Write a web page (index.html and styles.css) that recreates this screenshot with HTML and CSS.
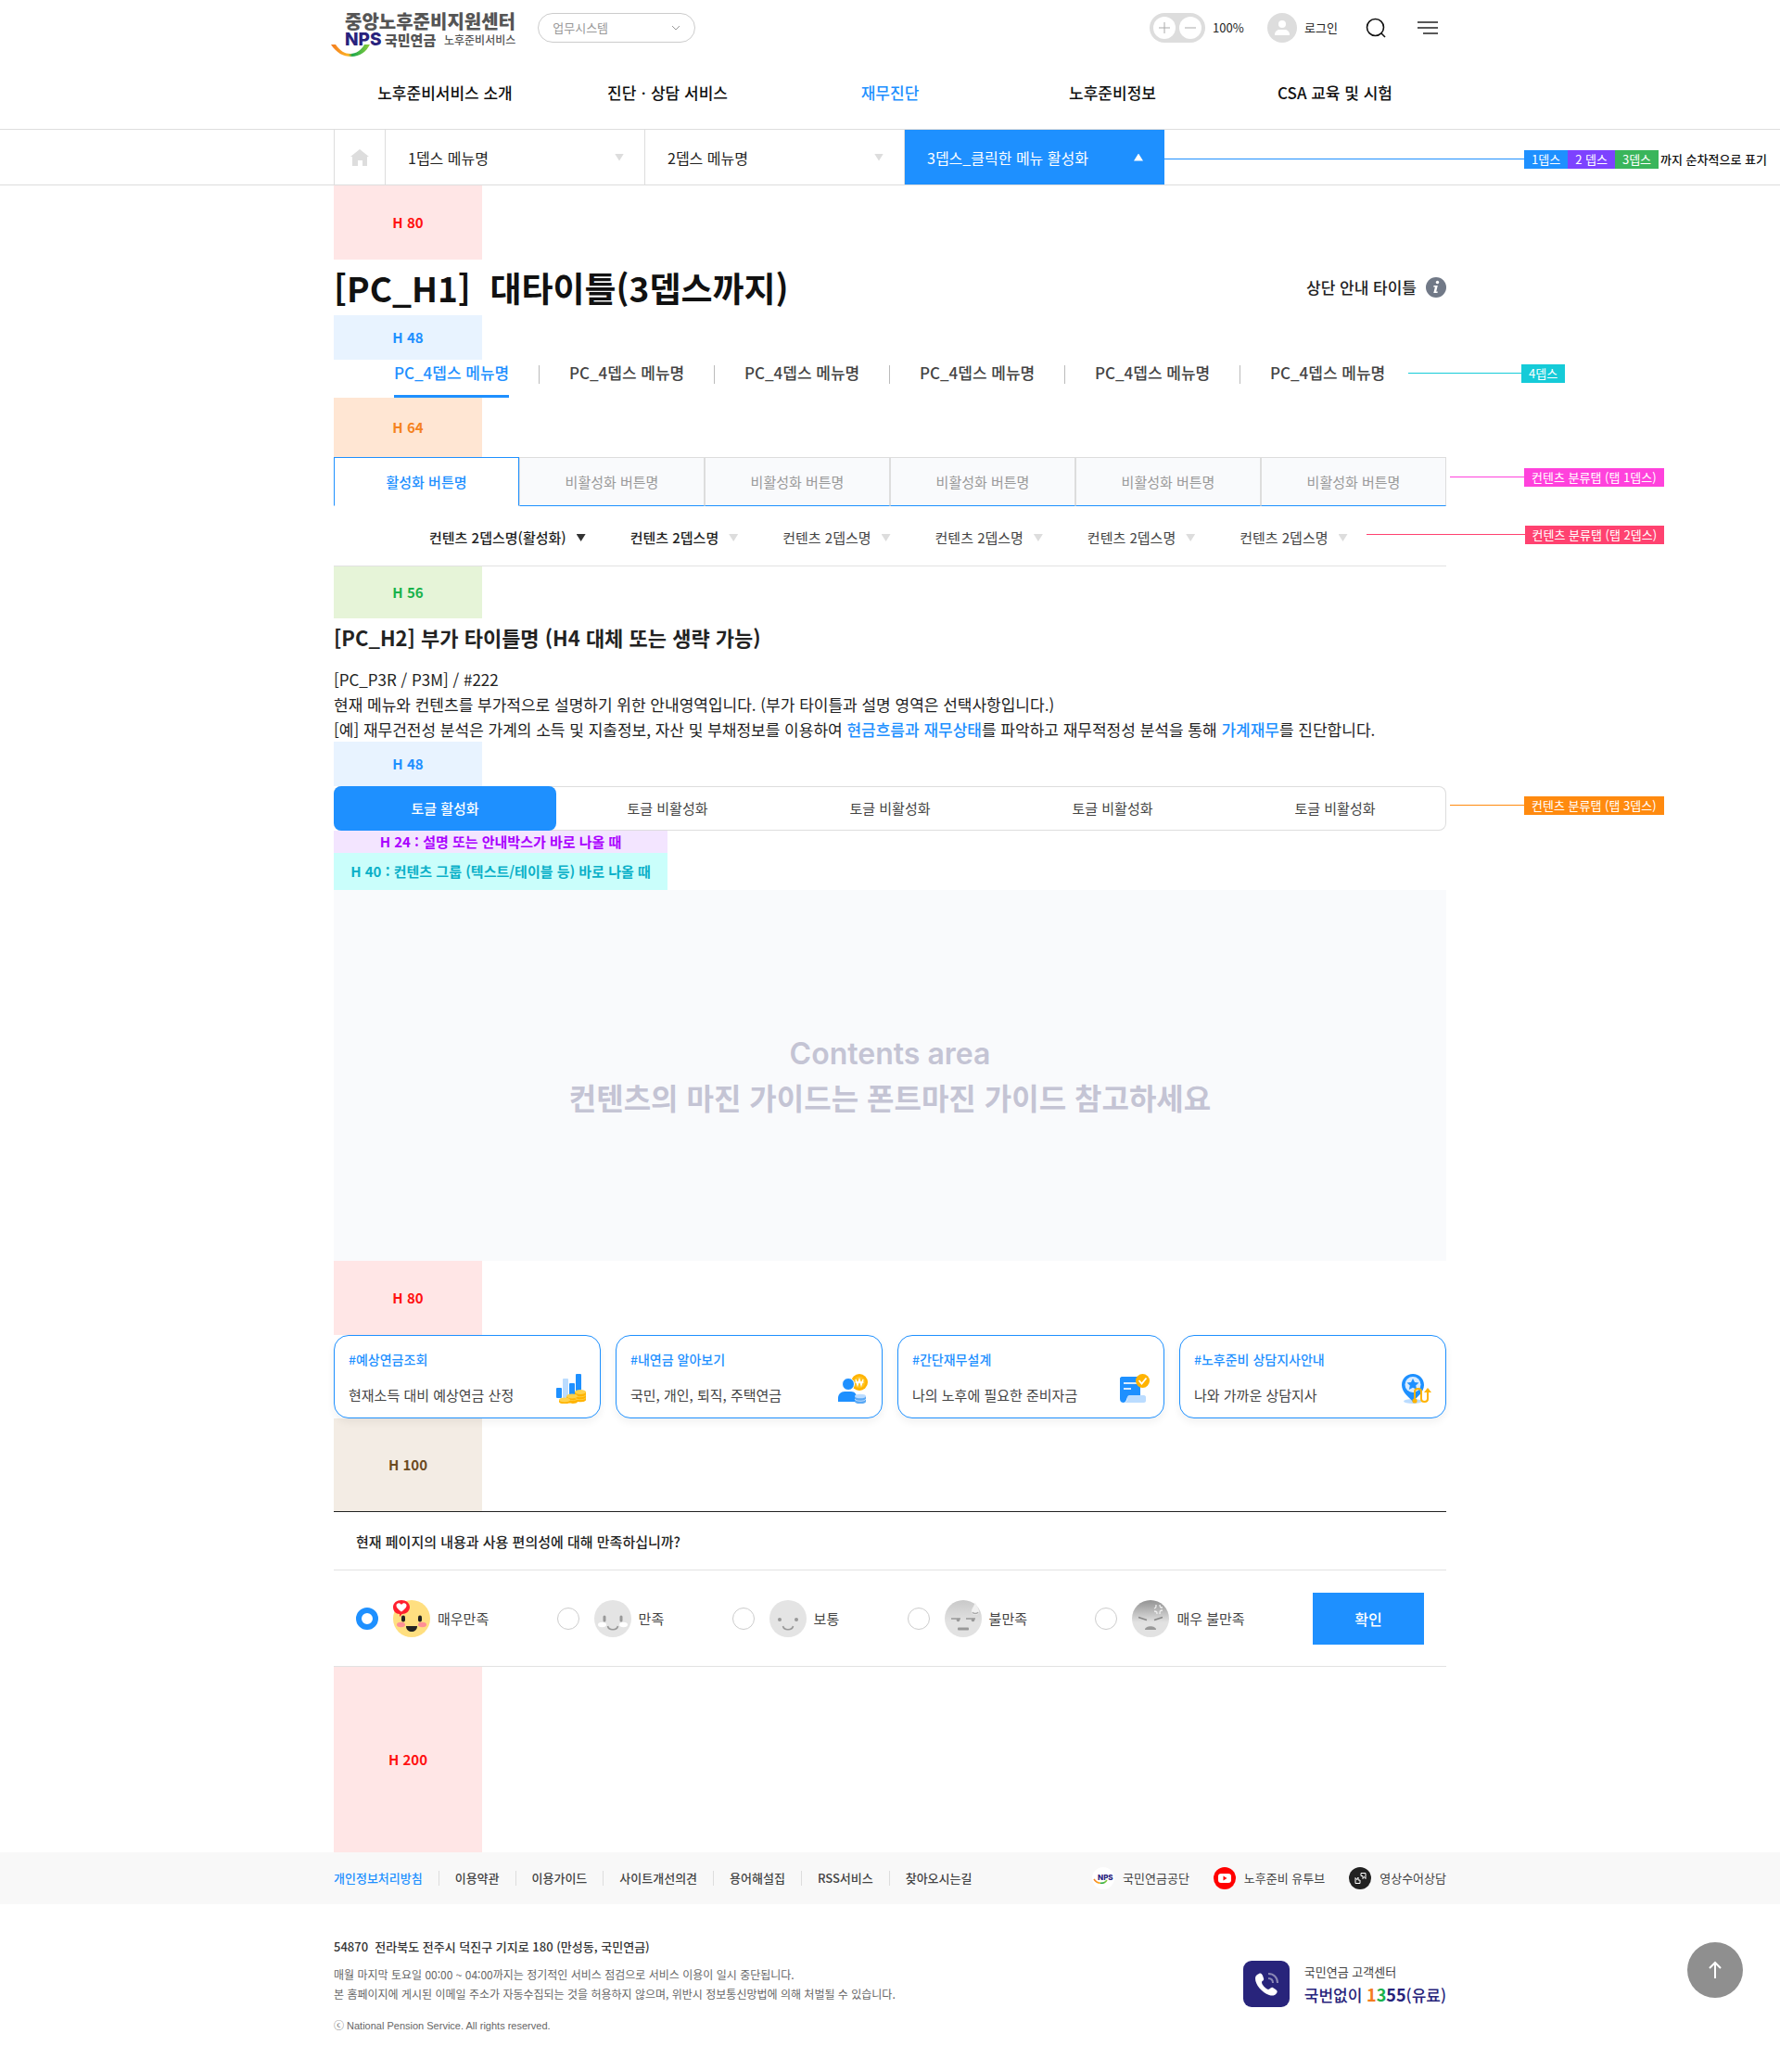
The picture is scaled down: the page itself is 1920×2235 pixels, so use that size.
FILE: index.html
```html
<!DOCTYPE html>
<html lang="ko">
<head>
<meta charset="utf-8">
<meta name="viewport" content="width=device-width, initial-scale=1">
<title>중앙노후준비지원센터</title>
<link rel="stylesheet" href="styles.css">
</head>
<body>
<header class="header">
  <div class="container header-top">
    <a class="logo" href="#">
      <span class="logo-title">중앙노후준비지원센터</span>
      <span class="logo-sub"><b class="logo-nps">NPS</b><b class="logo-org">국민연금</b><span class="logo-service">노후준비서비스</span></span>
      <svg class="logo-smile" width="42" height="14" viewBox="0 0 42 14" aria-hidden="true">
        <defs><linearGradient id="smile" x1="0" x2="1"><stop offset="0" stop-color="#f47b20"/><stop offset=".45" stop-color="#fcb424"/><stop offset=".55" stop-color="#19a84b"/><stop offset="1" stop-color="#8fce3c"/></linearGradient></defs>
        <path d="M0 1h5c5 7 10 10 16 10S33 7 36 1h6C38 9 31 14 22 14S6 10 0 1z" fill="url(#smile)"/>
      </svg>
    </a>
    <label class="system">
      <span class="sr-only">업무시스템 선택</span>
      <select><option>업무시스템</option></select>
      <svg width="10" height="6" viewBox="0 0 10 6" aria-hidden="true"><path d="M1 1l4 4 4-4" fill="none" stroke="#999"/></svg>
    </label>
    <div class="tools">
      <div class="zoom">
        <button type="button" aria-label="확대"><svg width="12" height="12" viewBox="0 0 12 12"><path d="M0 6h12M6 0v12" stroke="#aaa"/></svg></button>
        <button type="button" aria-label="축소"><svg width="12" height="12" viewBox="0 0 12 12"><path d="M0 6h12" stroke="#aaa"/></svg></button>
      </div>
      <span class="zoom-value">100%</span>
      <a class="login" href="#">
        <svg width="32" height="32" viewBox="0 0 32 32" aria-hidden="true"><circle cx="16" cy="16" r="16" fill="#ddd"/><circle cx="16" cy="12" r="4" fill="#fff"/><path d="M8 24v-1c0-3 3-5 5-5h6c2 0 5 2 5 5v1z" fill="#fff"/></svg>
        로그인
      </a>
      <button class="icon-button search" type="button" aria-label="검색"><svg width="24" height="24" viewBox="0 0 24 24"><circle cx="11.500" cy="11.500" r="9" fill="none" stroke="#111" stroke-width="1.600"/><path d="M18 18l4 4" stroke="#111" stroke-width="1.600"/></svg></button>
      <button class="icon-button" type="button" aria-label="전체메뉴"><svg width="24" height="24" viewBox="0 0 24 24"><path d="M1 6h22M1 12h22M7 18h16" stroke="#222" stroke-width="1.600"/></svg></button>
    </div>
  </div>
  <nav class="container gnb" aria-label="주메뉴">
    <a href="#">노후준비서비스 소개</a>
    <a href="#">진단ㆍ상담 서비스</a>
    <a class="on" href="#">재무진단</a>
    <a href="#">노후준비정보</a>
    <a href="#">CSA 교육 및 시험</a>
  </nav>
</header>

<div class="location">
  <div class="container location-row">
    <a class="home" href="#" aria-label="홈"><svg width="20" height="18" viewBox="0 0 20 18"><path d="M10 0l10 8h-2v10h-5v-6H8v6H2V8H0z" fill="#ddd"/></svg></a>
    <button class="depth" type="button">1뎁스 메뉴명<i class="arrow"></i></button>
    <button class="depth" type="button">2뎁스 메뉴명<i class="arrow"></i></button>
    <button class="depth on" type="button">3뎁스_클릭한 메뉴 활성화<i class="arrow up"></i></button>
    <p class="note note-path"><span class="line"></span><span class="tag blue">1뎁스</span><span class="tag violet">2 뎁스</span><span class="tag green">3뎁스</span><span class="note-text">까지 순차적으로 표기</span></p>
  </div>
</div>

<main class="container">
  <div class="space h80">H 80</div>
  <div class="title-row">
    <h1>[PC_H1]&nbsp; 대타이틀(3뎁스까지)</h1>
    <a class="guide" href="#">상단 안내 타이틀
      <svg width="22" height="22" viewBox="0 0 22 22" aria-hidden="true"><circle cx="11" cy="11" r="11" fill="#717987"/><circle cx="12.500" cy="5.500" r="1.700" fill="#fff"/><path d="M8.500 9h4.300l-1.600 6.500h1.600l-.3 1.500H8.300l1.600-6.500H8.200z" fill="#fff"/></svg>
    </a>
  </div>
  <div class="space h48">H 48</div>

  <div class="row">
    <ul class="depth4">
      <li><a class="on" href="#">PC_4뎁스 메뉴명</a></li>
      <li><a href="#">PC_4뎁스 메뉴명</a></li>
      <li><a href="#">PC_4뎁스 메뉴명</a></li>
      <li><a href="#">PC_4뎁스 메뉴명</a></li>
      <li><a href="#">PC_4뎁스 메뉴명</a></li>
      <li><a href="#">PC_4뎁스 메뉴명</a></li>
    </ul>
    <p class="note note-depth4"><span class="line"></span><span class="tag cyan">4뎁스</span></p>
  </div>
  <div class="space h64">H 64</div>

  <div class="row">
    <div class="tabs" role="tablist">
      <button type="button" role="tab" aria-selected="true">활성화 버튼명</button>
      <button type="button" role="tab">비활성화 버튼명</button>
      <button type="button" role="tab">비활성화 버튼명</button>
      <button type="button" role="tab">비활성화 버튼명</button>
      <button type="button" role="tab">비활성화 버튼명</button>
      <button type="button" role="tab">비활성화 버튼명</button>
    </div>
    <p class="note note-tab1"><span class="line"></span><span class="tag pink">컨텐츠 분류탭 (탭 1뎁스)</span></p>
  </div>

  <div class="row subtabs-row">
    <div class="subtabs">
      <button class="on" type="button">컨텐츠 2뎁스명(활성화)<i class="arrow"></i></button>
      <button class="strong" type="button">컨텐츠 2뎁스명<i class="arrow"></i></button>
      <button type="button">컨텐츠 2뎁스명<i class="arrow"></i></button>
      <button type="button">컨텐츠 2뎁스명<i class="arrow"></i></button>
      <button type="button">컨텐츠 2뎁스명<i class="arrow"></i></button>
      <button type="button">컨텐츠 2뎁스명<i class="arrow"></i></button>
    </div>
    <p class="note note-tab2"><span class="line"></span><span class="tag red">컨텐츠 분류탭 (탭 2뎁스)</span></p>
  </div>
  <div class="space h56">H 56</div>

  <h2>[PC_H2] 부가 타이틀명 (H4 대체 또는 생략 가능)</h2>
  <p class="lead">[PC_P3R / P3M] / #222<br>현재 메뉴와 컨텐츠를 부가적으로 설명하기 위한 안내영역입니다. (부가 타이틀과 설명 영역은 선택사항입니다.)<br>[예] 재무건전성 분석은 가계의 소득 및 지출정보, 자산 및 부채정보를 이용하여 <em>현금흐름과 재무상태</em>를 파악하고 재무적정성 분석을 통해 <em>가계재무</em>를 진단합니다.</p>
  <div class="space h48">H 48</div>

  <div class="row">
    <div class="toggle">
      <button class="on" type="button">토글 활성화</button>
      <button type="button">토글 비활성화</button>
      <button type="button">토글 비활성화</button>
      <button type="button">토글 비활성화</button>
      <button type="button">토글 비활성화</button>
    </div>
    <p class="note note-tab3"><span class="line"></span><span class="tag orange">컨텐츠 분류탭 (탭 3뎁스)</span></p>
  </div>
  <div class="space wide h24">H 24 : 설명 또는 안내박스가 바로 나올 때</div>
  <div class="space wide h40">H 40 : 컨텐츠 그룹 (텍스트/테이블 등) 바로 나올 때</div>

  <section class="contents">
    <p class="contents-en">Contents area</p>
    <p>컨텐츠의 마진 가이드는 폰트마진 가이드 참고하세요</p>
  </section>
  <div class="space h80">H 80</div>

  <section class="cards">
    <a class="card" href="#">
      <strong>#예상연금조회</strong>
      <span>현재소득 대비 예상연금 산정</span>
      <svg width="32" height="32" viewBox="0 0 32 32" aria-hidden="true">
        <rect y="15" width="6" height="11" rx="1" fill="#1e90ff"/><rect x="7" y="5" width="6" height="22" rx="1" fill="#bbdcff"/><rect x="14" y="10" width="6" height="14" rx="1" fill="#1e90ff"/><rect x="21" width="6" height="20" rx="1" fill="#1e90ff"/>
        <path d="M3 28h12v2c0 3-12 3-12 0zM11 24h12v6c0 3-12 2-12 0zM20 19h12v9c0 3-12 3-12 0z" fill="#ffb300"/>
        <ellipse cx="9" cy="28" rx="6" ry="2.500" fill="#ffd24d"/><ellipse cx="17" cy="24" rx="6" ry="2.500" fill="#ffd24d"/><ellipse cx="26" cy="19.500" rx="6" ry="2.500" fill="#ffd24d"/>
        <path d="M20 22.500c1 3 11 3 12 0M20 25.500c1 3 11 3 12 0M13 28c3 1 8 1 10-1" fill="none" stroke="#ffd24d" stroke-width=".8"/>
      </svg>
    </a>
    <a class="card" href="#">
      <strong>#내연금 알아보기</strong>
      <span>국민, 개인, 퇴직, 주택연금</span>
      <svg width="32" height="32" viewBox="0 0 32 32" aria-hidden="true">
        <circle cx="23" cy="9" r="9" fill="#ffb300"/><circle cx="23" cy="9" r="6.500" fill="#ffc21f"/><path d="M19 6l2 6 2-6 2 6 2-6M18.500 9h9" fill="none" stroke="#fff" stroke-width="1.400"/>
        <circle cx="11" cy="11" r="6.500" fill="#1e90ff" stroke="#fff"/><path d="M0 30v-4c0-4 3-7 7-7h7c4 0 6 3 6 6v5z" fill="#1e90ff"/>
        <path d="M18 24h12v6c-1 3-11 3-12 0z" fill="#5aa9f5"/><ellipse cx="24" cy="24" rx="6" ry="2.300" fill="#bbdcff"/><path d="M18 27c1 3 11 3 12 0" fill="none" stroke="#bbdcff"/>
      </svg>
    </a>
    <a class="card" href="#">
      <strong>#간단재무설계</strong>
      <span>나의 노후에 필요한 준비자금</span>
      <svg width="32" height="32" viewBox="0 0 32 32" aria-hidden="true">
        <path d="M2 3h20v22H8c-1 3-2 6-4 6s-4-1-4-4V5c0-1 1-2 2-2z" fill="#1e90ff"/><path d="M8 25c0-1 1-2 2-2h16c1 0 2 1 2 2v4c0 1-1 2-2 2H4c3 0 4-3 4-6z" fill="#bbdcff"/>
        <path d="M4 10h14M4 16h8" stroke="#d7ebff" stroke-width="2"/>
        <circle cx="24.500" cy="7.500" r="7.500" fill="#ffb300"/><path d="M20.500 7l3 3.500 5-6" fill="none" stroke="#fff" stroke-width="1.800"/>
      </svg>
    </a>
    <a class="card" href="#">
      <strong>#노후준비 상담지사안내</strong>
      <span>나와 가까운 상담지사</span>
      <svg width="32" height="32" viewBox="0 0 32 32" aria-hidden="true">
        <ellipse cx="12" cy="29.500" rx="10" ry="2.500" fill="#bbdcff"/><path d="M12 0c7 0 12 5 12 12 0 8-8 13-12 18C8 25 0 20 0 12 0 5 5 0 12 0z" fill="#1e90ff"/><circle cx="12" cy="11.500" r="8.500" fill="#d7ebff"/>
        <path d="M12 5l2 4 4.500.5-3.300 3 1 4.500-4.200-2.300L7.800 17l1-4.500-3.300-3L10 9z" fill="#1e90ff"/>
        <path d="M14 29V19c0-4 7-4 7 0v8c0 4 7 4 7 0v-8" fill="none" stroke="#ffb300" stroke-width="2"/><circle cx="14" cy="29" r="2.600" fill="#ffb300"/><path d="M28 15l4 5h-8z" fill="#ffb300"/>
      </svg>
    </a>
  </section>
  <div class="space h100">H 100</div>

  <form class="survey">
    <p class="question">현재 페이지의 내용과 사용 편의성에 대해 만족하십니까?</p>
    <div class="answers">
      <label><input type="radio" name="score" checked>
        <svg width="40" height="40" viewBox="0 0 40 40" aria-hidden="true"><circle cx="20" cy="20" r="20" fill="#ffdf80"/><rect x="9" y="16.500" width="4" height="7" rx="2" fill="#222"/><rect x="27" y="16.500" width="4" height="7" rx="2" fill="#222"/><ellipse cx="8.500" cy="26.500" rx="4.500" ry="2.700" fill="#ff8f96"/><ellipse cx="31.500" cy="26.500" rx="4.500" ry="2.700" fill="#ff8f96"/><path d="M14 28h12c0 8-12 8-12 0z" fill="#222"/><path d="M9 0c5 0 9 3 9 7.500S14 15 10 15c-1 0-1 1-3 3v-3C3 15 0 12 0 7.500S4 0 9 0z" fill="#ff1f2d"/><path d="M9 12.500C5 9.500 3.500 8 3.500 5.800c0-3 4-3.400 5.500-.8 1.500-2.600 5.500-2.200 5.500.8C14.500 8 13 9.500 9 12.500z" fill="#fff"/></svg>
        매우만족</label>
      <label><input type="radio" name="score">
        <svg width="40" height="40" viewBox="0 0 40 40" aria-hidden="true"><circle cx="20" cy="20" r="20" fill="#e4e4e4"/><rect x="9.500" y="16.500" width="3" height="7" rx="1.500" fill="#999"/><rect x="27.500" y="16.500" width="3" height="7" rx="1.500" fill="#999"/><ellipse cx="8.500" cy="26.500" rx="4.500" ry="2.700" fill="#fff"/><ellipse cx="31.500" cy="26.500" rx="4.500" ry="2.700" fill="#fff"/><path d="M14.500 28c1 5 10 5 11 0" fill="none" stroke="#999" stroke-width="1.600"/></svg>
        만족</label>
      <label><input type="radio" name="score">
        <svg width="40" height="40" viewBox="0 0 40 40" aria-hidden="true"><circle cx="20" cy="20" r="20" fill="#e4e4e4"/><circle cx="11" cy="21" r="2" fill="#999"/><circle cx="29" cy="21" r="2" fill="#999"/><path d="M14.500 28c1 5 10 5 11 0" fill="none" stroke="#999" stroke-width="1.600"/></svg>
        보통</label>
      <label><input type="radio" name="score">
        <svg width="40" height="40" viewBox="0 0 40 40" aria-hidden="true"><defs><linearGradient id="dull" x2="0" y2="1"><stop offset="0" stop-color="#c9c9c9"/><stop offset=".6" stop-color="#e2e2e2"/></linearGradient></defs><circle cx="20" cy="20" r="20" fill="url(#dull)"/><path d="M7 20h10M23 20h10" stroke="#999" stroke-width="1.600"/><circle cx="14.500" cy="21.500" r="1.800" fill="#999"/><circle cx="30.500" cy="21.500" r="1.800" fill="#999"/><rect x="14" y="29.500" width="12" height="3" rx="1" fill="#999"/><path d="M33 2c1 4 4 7 4 10s-2 4-4 4-4-1-4-4 3-6 4-10z" fill="#f0f0f0"/><path d="M30 13c1 2 5 2 6 0" stroke="#aaa" fill="none" stroke-width="1.500"/></svg>
        불만족</label>
      <label><input type="radio" name="score">
        <svg width="40" height="40" viewBox="0 0 40 40" aria-hidden="true"><defs><linearGradient id="angry" x2="0" y2="1"><stop offset="0" stop-color="#929292"/><stop offset=".6" stop-color="#e2e2e2"/></linearGradient></defs><circle cx="20" cy="20" r="20" fill="url(#angry)"/><path d="M7 18.500l9 3M33 18.500l-9 3" stroke="#888" stroke-width="1.800"/><path d="M14 32c0-5 12-5 12 0z" fill="#999"/><path d="M26 5c0 3 0 3-2 4M30 5c0 3 1 3 3 3M24 12c3 0 3 1 3 3M33 11c-3 0-3 1-3 4" fill="none" stroke="#eee" stroke-width="1.300"/></svg>
        매우 불만족</label>
      <button class="submit" type="submit">확인</button>
    </div>
  </form>
  <div class="space h200">H 200</div>
</main>

<footer class="footer">
  <div class="footer-bar">
    <div class="container footer-row">
      <nav class="policy" aria-label="이용안내">
        <a class="on" href="#">개인정보처리방침</a>
        <a href="#">이용약관</a>
        <a href="#">이용가이드</a>
        <a href="#">사이트개선의견</a>
        <a href="#">용어해설집</a>
        <a href="#">RSS서비스</a>
        <a href="#">찾아오시는길</a>
      </nav>
      <nav class="related" aria-label="관련 사이트">
        <a href="#"><svg width="24" height="24" viewBox="0 0 24 24" aria-hidden="true"><circle cx="12" cy="12" r="12" fill="#fff"/><text x="6" y="14" font-family="Inter, sans-serif" font-size="8" font-weight="800" fill="#28227d">NPS</text><path d="M2 13c3 5 11 6 14 1" fill="none" stroke="url(#smile)" stroke-width="1.500"/></svg>국민연금공단</a>
        <a href="#"><svg width="24" height="24" viewBox="0 0 24 24" aria-hidden="true"><circle cx="12" cy="12" r="12" fill="#f00"/><rect x="5" y="7" width="14" height="10" rx="3" fill="#fff"/><path d="M10.500 9.500l4 2.500-4 2.500z" fill="#f00"/></svg>노후준비 유투브</a>
        <a href="#"><svg width="24" height="24" viewBox="0 0 24 24" aria-hidden="true"><circle cx="12" cy="12" r="12" fill="#222"/><path d="M7 17.500v-6l1.500 2L10 11v3h2v3.500zM18 6.500v6l-1.500-2-1.500 2v-3h-2v-3z" fill="none" stroke="#fff"/></svg>영상수어상담</a>
      </nav>
    </div>
  </div>
  <div class="container footer-info">
    <div>
      <address>54870&nbsp; 전라북도 전주시 덕진구 기지로 180 (만성동, 국민연금)</address>
      <p class="legal">매월 마지막 토요일 00:00 ~ 04:00까지는 정기적인 서비스 점검으로 서비스 이용이 일시 중단됩니다.<br>본 홈페이지에 게시된 이메일 주소가 자동수집되는 것을 허용하지 않으며, 위반시 정보통신망법에 의해 처벌될 수 있습니다.</p>
      <p class="copyright">ⓒ National Pension Service. All rights reserved.</p>
    </div>
    <div class="call">
      <svg width="50" height="50" viewBox="0 0 50 50" aria-hidden="true"><rect width="50" height="50" rx="9" fill="#28247b"/><path d="M17 14c2-1 3 0 4 2l1 3c1 2-2 3-2 4 0 3 4 7 7 8 2 0 3-3 5-2l3 2c2 1 2 3 1 4-2 3-5 3-8 2-8-3-15-11-15-18 0-3 2-4 4-5z" fill="#fff"/><path d="M27 19c3 0 5 2 5 5M27 14c6 0 10 4 10 10" fill="none" stroke="#8a88b5" stroke-width="2"/></svg>
      <p>국민연금 고객센터<strong>국번없이 <b class="n1">1</b><b class="n3">3</b><b>55</b>(유료)</strong></p>
    </div>
  </div>
</footer>
<a class="to-top" href="#" aria-label="맨 위로"><svg width="14" height="20" viewBox="0 0 14 20"><path d="M7 19V2M1 8l6-6 6 6" fill="none" stroke="#fff" stroke-width="2"/></svg></a>
</body>
</html>
```
FILE: styles.css
```css
* { box-sizing: border-box; }

body {
  margin: 0;
  background: #fff;
  color: #222;
  font-family: "Noto Sans CJK KR", "Noto Sans", sans-serif;
  font-size: 15px;
  line-height: 24px;
  word-break: keep-all;
}

h1, h2, p, ul { margin: 0; padding: 0; }
ul { list-style: none; }
a { color: inherit; text-decoration: none; }
svg { display: block; flex: none; }
em, address { font-style: normal; }

button, select, input {
  margin: 0;
  padding: 0;
  border: 0;
  background: none;
  color: inherit;
  font: inherit;
  cursor: pointer;
}

button, .gnb a, .depth4 a, .tag { white-space: nowrap; }

.container {
  width: 100%;
  max-width: 1200px;
  margin: 0 auto;
}

.sr-only {
  position: absolute;
  width: 1px;
  height: 1px;
  overflow: hidden;
  clip-path: inset(50%);
}

/* Header */
.header { border-bottom: 1px solid #ddd; }

.header-top {
  display: flex;
  align-items: flex-start;
  padding-top: 13px;
}

.logo {
  position: relative;
  display: flex;
  flex-direction: column;
  padding-left: 12px;
  color: #555;
}
.logo-title { font-size: 20px; font-weight: 900; line-height: 20px; }
.logo-sub { display: flex; align-items: center; line-height: 20px; }
.logo-nps {
  width: 43px;
  color: #28227d;
  font-family: Inter, sans-serif;
  font-size: 19px;
  font-weight: 800;
}
.logo-org { width: 64px; font-weight: 900; }
.logo-service { font-size: 12px; font-weight: 500; }
.logo-smile { position: absolute; left: -3px; top: 34px; }

.system {
  display: flex;
  align-items: center;
  width: 170px;
  height: 32px;
  margin: 1px 0 0 24px;
  padding-right: 15px;
  border: 1px solid #ccc;
  border-radius: 16px;
}
.system select {
  flex: 1;
  height: 30px;
  padding-left: 15px;
  appearance: none;
  color: #999;
  font-size: 13px;
}

.tools {
  display: flex;
  align-items: center;
  height: 32px;
  margin: 1px 0 0 auto;
  font-size: 13px;
}
.zoom {
  display: flex;
  align-items: center;
  justify-content: space-between;
  width: 60px;
  height: 32px;
  padding: 0 4px;
  border-radius: 16px;
  background: #ddd;
}
.zoom button {
  display: grid;
  place-items: center;
  width: 24px;
  height: 24px;
  border-radius: 50%;
  background: #fff;
}
.zoom-value { width: 59px; margin-left: 8px; }
.login { display: flex; align-items: center; gap: 8px; margin-right: 21px; }
.icon-button { display: grid; place-items: center; width: 40px; height: 40px; }
.search { margin-right: 16px; }

.gnb {
  display: grid;
  grid-template-columns: repeat(5, 1fr);
  margin-top: 9px;
  color: #111;
  font-size: 17px;
  font-weight: 500;
  text-align: center;
}
.gnb a { padding: 26px 0 27px; }
.gnb .on { color: #1e90ff; }

/* Breadcrumb */
.location { border-bottom: 1px solid #ddd; }
.location-row { display: flex; align-items: stretch; height: 59px; }
.home {
  display: grid;
  flex: none;
  place-items: center;
  width: 56px;
  border: solid #ddd;
  border-width: 0 1px;
}
.depth {
  display: flex;
  flex: 0 0 280px;
  align-items: center;
  justify-content: space-between;
  padding: 0 22px 0 24px;
  border-right: 1px solid #ddd;
  font-size: 16px;
}
.depth.on { border-color: #1e90ff; background: #1e90ff; color: #fff; }

.arrow {
  width: 10px;
  height: 8px;
  background: #ddd;
  clip-path: polygon(0 0, 100% 0, 50% 100%);
}
.arrow.up { background: #fff; clip-path: polygon(50% 0, 100% 100%, 0 100%); }

/* Annotations that run off the right side of a row */
.row { display: flex; align-items: flex-start; }
.note {
  display: flex;
  flex: none;
  align-items: flex-start;
  color: #000;
  font-size: 13px;
  line-height: 20px;
  white-space: nowrap;
}
.line { width: 80px; height: 1px; margin-top: 9px; background: currentColor; }
.tag { padding: 0 8px; color: #fff; }
.note-path { margin-top: 22px; color: #1e90ff; }
.note-path .line { width: 388px; }
.note-text { padding-left: 2px; color: #111; font-weight: 500; }
.note-depth4 { margin: 5px 0 0 25px; color: #15cbd8; }
.note-depth4 .line { width: 122px; }
.note-tab1 { margin: 12px 0 0 4px; color: #ff42dc; }
.note-tab2 { margin: 21px 0 0 20px; color: #ff4270; }
.note-tab2 .line { width: 171px; }
.note-tab3 { margin: 11px 0 0 4px; color: #ff8a0f; }
.blue { background: #1e90ff; }
.violet { background: #7d42ff; }
.green { background: #3ab55b; }
.cyan { background: #15cbd8; }
.pink { background: #ff42dc; }
.red { background: #ff4270; }
.orange { background: #ff8a0f; }

/* Spacing blocks */
.space {
  display: grid;
  place-items: center;
  width: 160px;
  font-weight: 700;
}
.wide { width: 360px; }
.h24 { height: 24px; background: #f3e5ff; color: #aa00ff; }
.h40 { height: 40px; background: #cafefb; color: #0ab0c8; }
.h48 { height: 48px; background: #e8f3ff; color: #1e90ff; }
.h56 { height: 56px; background: #e6f4d8; color: #19b24b; }
.h64 { height: 64px; background: #ffe6d3; color: #f58220; }
.h80 { height: 80px; background: #ffe6e6; color: #ff1111; }
.h100 { height: 100px; background: #f3ece4; color: #6b4a1f; }
.h200 { height: 200px; background: #ffe6e6; color: #ff1111; }

/* Titles */
.title-row { display: flex; align-items: center; justify-content: space-between; }
h1 { color: #111; font-size: 37px; font-weight: 700; line-height: 60px; }
.guide { display: flex; align-items: center; gap: 10px; font-size: 17px; font-weight: 500; }
h2 { font-size: 22px; font-weight: 700; line-height: 40px; }
.lead { margin-top: 12px; font-size: 17px; line-height: 27px; }
.lead em { color: #1e90ff; font-weight: 500; }

/* Fourth level menu */
.depth4 { display: flex; margin-left: 65px; font-size: 17px; color: #444; }
.depth4 li { display: flex; }
.depth4 li + li::before {
  width: 1px;
  height: 20px;
  margin: 6px 32px 0;
  background: #bbb;
  content: "";
}
.depth4 a {
  width: 124px;
  padding: 2px 0 12px;
  border-bottom: 3px solid transparent;
  text-align: center;
  font-weight: 500;
}
.depth4 .on { border-color: #1e90ff; color: #1e90ff; }

/* Content tabs, first level */
.tabs { display: grid; flex: 0 0 100%; grid-template-columns: repeat(6, 1fr); }
.tabs button {
  height: 53px;
  border: 1px solid #ddd;
  border-bottom-color: #1e90ff;
  background: #f9fafc;
  color: #999;
}
.tabs [aria-selected="true"] {
  border-color: #1e90ff;
  border-bottom-color: #fff;
  background: #fff;
  color: #1e90ff;
  font-weight: 500;
}

/* Content tabs, second level */
.subtabs-row { border-bottom: 1px solid #e2e2e2; }
.subtabs { display: flex; gap: 48px; margin-left: 103px; }
.subtabs button { display: flex; align-items: center; gap: 11px; height: 64px; padding-top: 4px; color: #444; }
.subtabs .on, .subtabs .strong { color: #222; font-weight: 500; }
.subtabs .on .arrow { background: #333; }

/* Content toggle, third level */
.toggle {
  display: grid;
  flex: 0 0 100%;
  grid-template-columns: repeat(5, 1fr);
  border-radius: 8px;
  box-shadow: inset 0 0 0 1px #ddd;
}
.toggle button { height: 48px; border-radius: 8px; color: #444; }
.toggle .on { background: #1e90ff; color: #fff; font-weight: 500; }

/* Contents placeholder */
.contents {
  display: flex;
  flex-direction: column;
  justify-content: center;
  height: 400px;
  background: #f9fafc;
  color: #c4c4d4;
  font-size: 32px;
  font-weight: 700;
  line-height: 46px;
  text-align: center;
}
.contents-en { font-family: Inter, sans-serif; font-weight: 600; }

/* Shortcut cards */
.cards { display: grid; grid-template-columns: repeat(4, 1fr); gap: 16px; }
.card {
  display: grid;
  grid-template-columns: 1fr auto;
  align-content: start;
  height: 90px;
  padding: 13px 15px;
  border: 1px solid #1e90ff;
  border-radius: 16px;
  background: #fff;
  box-shadow: 0 4px 8px rgba(0, 0, 0, .06);
  color: #444;
}
.card strong { grid-column: 1 / -1; color: #1e90ff; font-size: 14px; font-weight: 500; }
.card span { margin-top: 15px; }
.card svg { margin-top: 4px; }

/* Satisfaction survey */
.survey { border-top: 1px solid #222; border-bottom: 1px solid #e2e2e2; }
.question { padding: 20px 24px 18px; border-bottom: 1px solid #e2e2e2; font-weight: 500; }
.answers {
  display: flex;
  align-items: center;
  justify-content: space-between;
  height: 103px;
  padding: 0 24px;
  color: #444;
}
.answers label { display: flex; align-items: center; gap: 8px; cursor: pointer; }
.answers input {
  width: 24px;
  height: 24px;
  margin-right: 8px;
  appearance: none;
  border: 1px solid #ccc;
  border-radius: 50%;
  background: #fff;
}
.answers input:checked { border: 6px solid #1e90ff; }
.submit { width: 120px; height: 56px; background: #1e90ff; color: #fff; font-size: 16px; font-weight: 500; }

/* Footer */
.footer-bar { background: #f8f8f8; }
.footer-row { display: flex; align-items: center; justify-content: space-between; height: 56px; color: #444; font-size: 13px; }
.policy, .related { display: flex; align-items: center; }
.policy a { display: flex; align-items: center; font-weight: 500; }
.policy .on { color: #1e90ff; }
.policy a + a::before { width: 1px; height: 16px; margin: 0 17px; background: #ddd; content: ""; }
.related { gap: 26px; }
.related a { display: flex; align-items: center; gap: 9px; }

.footer-info { display: flex; justify-content: space-between; padding: 34px 0 38px; }
address { color: #333; font-size: 13px; font-weight: 500; }
.legal { margin-top: 7px; color: #666; font-size: 12px; line-height: 21px; }
.copyright { margin-top: 12px; color: #666; font-family: "Liberation Sans", "Noto Sans CJK KR", sans-serif; font-size: 11px; line-height: 24px; }
.call { display: flex; align-items: center; align-self: flex-start; gap: 16px; margin-top: 27px; color: #444; font-size: 13px; line-height: 22px; }
.call strong { display: block; color: #28247b; font-size: 17px; font-weight: 500; line-height: 26px; }
.call b { font-size: 18px; }
.call .n1 { color: #f47b20; }
.call .n3 { color: #19b24b; }

.to-top {
  position: fixed;
  right: 40px;
  bottom: 80px;
  display: grid;
  place-items: center;
  width: 60px;
  height: 60px;
  border-radius: 50%;
  background: #8f8f8f;
}
```
